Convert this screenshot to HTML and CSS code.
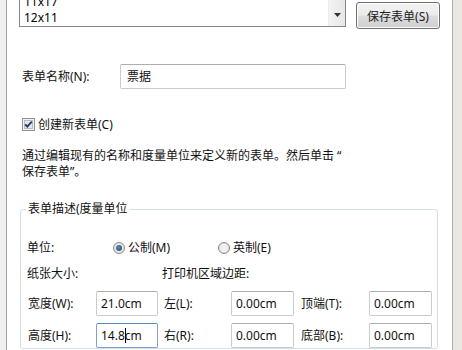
FILE: index.html
```html
<!DOCTYPE html>
<html lang="zh-CN">
<head>
<meta charset="utf-8">
<title>表单</title>
<link rel="stylesheet" href="styles.css">
</head>
<body>
<div class="strip-left"></div>
<main class="panel">
  <div class="top-row">
    <div class="listbox">
      <div class="list-items">
        <div class="item">11x17</div>
        <div class="item">12x11</div>
      </div>
      <div class="scrollbar">
        <svg class="arrow" width="7" height="4" viewBox="0 0 7 4"><path d="M0 0H7L3.5 4Z" fill="#333"/></svg>
      </div>
    </div>
    <button class="btn">保存表单(S)</button>
  </div>

  <div class="name-row">
    <span class="name-label">表单名称(N):</span>
    <div class="textbox name-box">票据</div>
  </div>

  <div class="check-row">
    <svg class="checkbox" width="13" height="13" viewBox="0 0 13 13">
      <rect x="0.5" y="0.5" width="12" height="12" fill="#f4f4f4" stroke="#8e8f8f"/>
      <rect x="2.5" y="2.5" width="8" height="8" fill="#e4e6ea" stroke="#b8bcc2"/>
      <path d="M3.2 6.4L5.3 8.7L9.8 3.6" fill="none" stroke="#1e3b66" stroke-width="1.8"/>
    </svg>
    <span>创建新表单(C)</span>
  </div>

  <p class="desc">通过编辑现有的名称和度量单位来定义新的表单。然后单击 “<br>保存表单”。</p>

  <fieldset class="group">
    <legend>表单描述(度量单位</legend>
    <div class="unit-row">
      <span class="unit-label">单位:</span>
      <span class="radio-opt opt1"><span class="radio checked"></span>公制(M)</span>
      <span class="radio-opt"><span class="radio"></span>英制(E)</span>
    </div>
    <div class="paper-row">
      <span class="paper-label">纸张大小:</span>
      <span>打印机区域边距:</span>
    </div>
    <div class="dim-row">
      <span class="c1">宽度(W):</span>
      <div class="textbox small">21.0cm</div>
      <span class="c2">左(L):</span>
      <div class="textbox small">0.00cm</div>
      <span class="c3">顶端(T):</span>
      <div class="textbox small">0.00cm</div>
    </div>
    <div class="dim-row second">
      <span class="c1">高度(H):</span>
      <div class="textbox small focus">14.8<span class="caret"></span>cm</div>
      <span class="c2">右(R):</span>
      <div class="textbox small">0.00cm</div>
      <span class="c3">底部(B):</span>
      <div class="textbox small">0.00cm</div>
    </div>
  </fieldset>
</main>
<div class="strip-right"></div>
</body>
</html>
```
FILE: styles.css
```css
* { box-sizing: border-box; }
html, body { margin: 0; padding: 0; }
body {
  width: 462px;
  height: 350px;
  overflow: hidden;
  display: flex;
  font-family: "Noto Sans", "Noto Sans CJK SC", sans-serif;
  font-size: 12px;
  line-height: 16px;
  color: #111;
  background: #f0f0f0;
}
.strip-left { width: 6px; background: #f0f0f0; flex: none; }
.strip-right { width: 9px; background: #ede7e3; flex: none; }
.panel {
  width: 447px;
  flex: none;
  background: #fff;
  border-left: 1px solid #a3a3a3;
  border-right: 1px solid #9fb4bb;
  height: 350px;
}
.top-row { display: flex; align-items: flex-start; }
.listbox {
  margin-left: 12px;
  width: 327px;
  height: 27px;
  border: 1px solid #828790;
  border-top: none;
  display: flex;
  overflow: hidden;
}
.list-items {
  flex: 1;
  display: flex;
  flex-direction: column;
  justify-content: flex-end;
  padding-left: 4px;
  padding-bottom: 0;
}
.item { line-height: 16px; color: #000; }
.scrollbar {
  width: 17px;
  background: linear-gradient(to right, #f4f4f4, #e6e6e6);
  border-left: 1px solid #ebebeb;
  display: flex;
  align-items: flex-end;
  justify-content: center;
  padding-bottom: 9px;
}
.arrow { display: block; }
.btn {
  margin: 2px 0 0 10px;
  width: 84px;
  height: 27px;
  border: 1px solid #707070;
  border-radius: 3px;
  background: linear-gradient(#f3f3f3 0%, #ebebeb 48%, #dddddd 52%, #cfcfcf 100%);
  font-family: "Noto Sans", "Noto Sans CJK SC", sans-serif;
  font-size: 12px;
  color: #222;
  padding: 0;
  box-shadow: inset 0 0 0 1px #fcfcfc;
}
.name-row {
  display: flex;
  align-items: center;
  margin-top: 35px;
}
.name-label { width: 113px; padding-left: 15px; }
.textbox {
  height: 25px;
  border: 1px solid #c9cbd0;
  border-top-color: #abadb3;
  border-radius: 2px;
  padding-left: 6px;
  display: flex;
  align-items: center;
  color: #111;
}
.name-box { width: 226px; }
.check-row {
  display: flex;
  align-items: center;
  height: 13px;
  margin-top: 29px;
  padding-left: 15px;
  gap: 3px;
}
.checkbox { display: block; }
.desc {
  margin: 17px 0 0;
  padding-left: 15px;
  line-height: 16px;
}
.group {
  margin: 21px 0 0 13px;
  width: 418px;
  border: 1px solid #d5dfe5;
  border-radius: 3px;
  padding: 23px 5px 0 5px;
  min-width: 0;
}
.group legend {
  padding: 0 2px;
  line-height: 16px;
}
.unit-row { display: flex; align-items: center; height: 16px; }
.unit-label { width: 87px; padding-left: 1px; }
.radio-opt { display: flex; align-items: center; gap: 3px; }
.opt1 { width: 105px; }
.radio {
  width: 12px;
  height: 12px;
  border-radius: 50%;
  border: 1px solid #8a8a8a;
  background: radial-gradient(circle, #f2f2f2 30%, #d9d9d9 100%);
  display: flex;
  align-items: center;
  justify-content: center;
}
.radio.checked::after {
  content: "";
  width: 6px;
  height: 6px;
  border-radius: 50%;
  background: radial-gradient(circle at 40% 40%, #6a88b0, #1b3d6e);
}
.paper-row { display: flex; height: 16px; margin-top: 10px; align-items: center; }
.paper-label { width: 136px; padding-left: 1px; }
.dim-row { display: flex; align-items: center; margin-top: 9px; }
.dim-row.second { margin-top: 7px; }
.c1 { width: 70px; padding-left: 2px; }
.c2 { width: 73px; padding-left: 6px; }
.c3 { width: 75px; padding-left: 7px; }
.small { width: 63px; padding-left: 4px; }
.dim-row .small:first-of-type { width: 62px; }
.focus { border-color: #7da2ce; border-top-color: #5a8ac0; }
.caret {
  display: inline-block;
  width: 1px;
  height: 15px;
  background: #000;
  margin: 0 -1px 0 0;
}
```
